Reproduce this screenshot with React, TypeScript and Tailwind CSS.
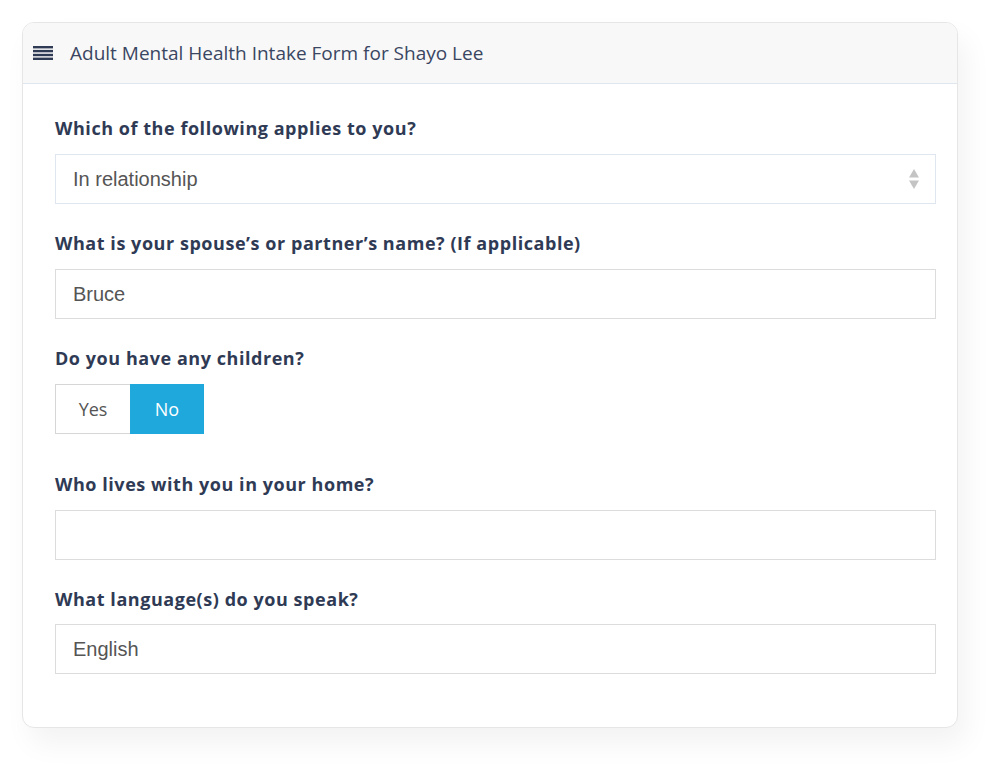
export default function App() {
  const label =
    "block text-[18px] font-bold leading-[24px] tracking-[0.55px] text-[#2f3a55] [font-family:'Open_Sans',sans-serif]";
  const input =
    "flex h-[50px] items-center border border-[#dcdcdc] bg-white px-[17px] text-[20px] text-[#555] [font-family:'Liberation_Sans',Arial,sans-serif]";

  return (
    <div className="min-h-[771px] bg-white pl-[22px] pt-[22px] pr-[42px]">
      <div className="w-[936px] overflow-hidden rounded-[12px] border border-[#e6e6e6] bg-white shadow-[8px_16px_28px_rgba(0,0,0,0.05)]">
        <header className="flex h-[61px] items-center gap-[17px] border-b border-[#dfe6ee] bg-[#f8f8f8] pl-[10px]">
          <svg width="20" height="14" viewBox="0 0 20 14">
            <rect x="0" y="0" width="20" height="2.4" fill="#2f3a55" />
            <rect x="0" y="3.9" width="20" height="2.4" fill="#2f3a55" />
            <rect x="0" y="7.8" width="20" height="2.4" fill="#2f3a55" />
            <rect x="0" y="11.6" width="20" height="2.4" fill="#2f3a55" />
          </svg>
          <h1 className="text-[19px] font-normal text-[#3a4662] [font-family:'Open_Sans',sans-serif]">
            Adult Mental Health Intake Form for Shayo Lee
          </h1>
        </header>

        <div className="pl-[32px] pr-[21px] pb-[53px] pt-[32px]">
          <label className={label}>Which of the following applies to you?</label>
          <div className={`${input} mt-[14px] justify-between border-[#dfe6f0]`}>
            <span>In relationship</span>
            <svg width="12" height="22" viewBox="0 0 12 22" className="mr-[-2px]">
              <path d="M6 1 L11 9.5 H1 Z" fill="#c4c4c4" />
              <path d="M6 21 L11 12.5 H1 Z" fill="#c4c4c4" />
            </svg>
          </div>

          <label className={`${label} mt-[27px]`}>What is your spouse’s or partner’s name? (If applicable)</label>
          <div className={`${input} mt-[14px]`}>Bruce</div>

          <label className={`${label} mt-[27px]`}>Do you have any children?</label>
          <div className="mt-[14px] flex h-[50px] w-[150px] text-[18px] [font-family:'Open_Sans',sans-serif]">
            <button className="flex w-[75px] items-center justify-center border border-r-0 border-[#d6d6d6] bg-white text-[#555]">
              Yes
            </button>
            <button className="flex w-[74px] items-center justify-center bg-[#1fa8dc] text-white">No</button>
          </div>

          <label className={`${label} mt-[38px]`}>Who lives with you in your home?</label>
          <div className={`${input} mt-[14px]`}></div>

          <label className={`${label} mt-[27px]`}>What language(s) do you speak?</label>
          <div className={`${input} mt-[13px]`}>English</div>
        </div>
      </div>
    </div>
  );
}
